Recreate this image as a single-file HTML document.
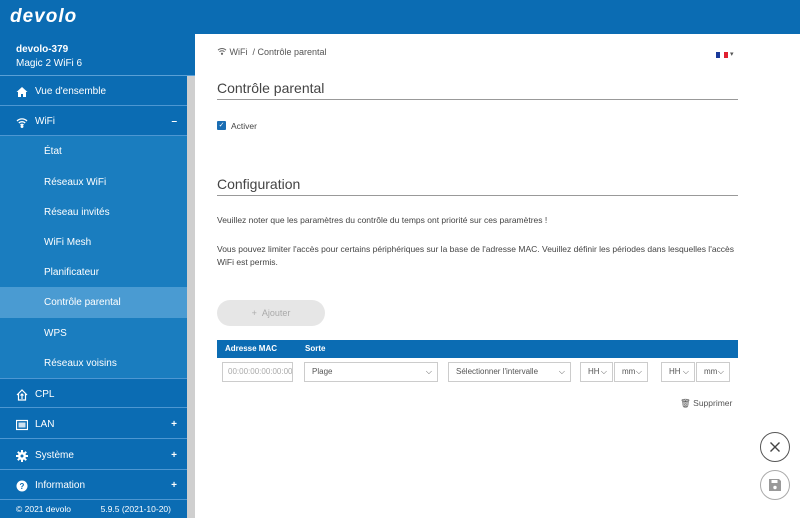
<!DOCTYPE html>
<html><head><meta charset="utf-8"><style>
*{box-sizing:border-box;margin:0;padding:0}
body{width:800px;height:518px;overflow:hidden;font-family:"Liberation Sans",sans-serif;background:#fff;position:relative;color:#333}
.top{position:absolute;left:0;top:0;width:800px;height:34px;background:#0b6cb3}
.logo{position:absolute;left:10px;top:6px;color:#fff;font-size:19px;font-style:italic;font-weight:bold;letter-spacing:1px}
.side{position:absolute;left:0;top:34px;width:195px;height:484px;background:#0b6cb3}
.scroll{position:absolute;left:187px;top:76px;width:8px;height:442px;background:#cfcfcf}
.dev{position:absolute;left:0;top:1px;width:195px;height:41px;color:#fff;padding:8px 16px;font-size:10px;line-height:14px;border-bottom:1px solid #5aa0d6}
.it{position:absolute;left:0;width:187px;height:30px;color:#fff;font-size:10px;line-height:30px;padding-top:1px;padding-left:35px;border-bottom:1px solid #4d97d2}
.it.sub{padding-left:44px;background:#1a7dbf;border-bottom:none}
.it.sel{background:#4a9bd2}
.it .pm{position:absolute;right:10px;top:1px;font-weight:bold}
.ic{position:absolute;left:16px;top:10px;width:12px;height:12px}
.foot{position:absolute;left:0;top:466px;width:187px;height:18px;color:#fff;font-size:8.5px;line-height:18px;padding:0 16px;display:flex;justify-content:space-between}
.crumb{position:absolute;left:217px;top:48px;font-size:9px;color:#555}
h2{position:absolute;left:217px;font-size:14px;font-weight:normal;color:#444;width:521px;border-bottom:1px solid #999;padding-bottom:3px}
.txt{position:absolute;left:217px;font-size:8.5px;color:#444;line-height:13px;width:525px}
.btn{position:absolute;left:217px;top:300px;width:108px;height:26px;border-radius:13px;background:#e6e6e6;color:#aaa;font-size:9px;line-height:26px;text-align:center}
.th{position:absolute;left:217px;top:340px;width:521px;height:18px;background:#0b6cb3;color:#fff;font-size:8px;font-weight:bold;line-height:18px}
.sel2{position:absolute;top:362px;height:20px;border:1px solid #ccc;font-size:8px;color:#555;line-height:18px;padding-left:7px}
.sel2 .v{position:absolute;right:5px;top:0;color:#555;font-size:8px}
.circ{position:absolute;left:760px;width:30px;height:30px;border-radius:50%;border:1.5px solid #555;text-align:center}
</style></head><body>
<div class="top"><div class="logo">devolo</div></div>
<div class="side">
<div class="dev"><b>devolo-379</b><br>Magic 2 WiFi 6</div>
</div>
<div class="scroll"></div>
<div class="it" style="top:76px"><svg class="ic" viewBox="0 0 12 12"><path d="M6 1L0.5 6H2v5h3V8h2v3h3V6h1.5z" fill="#fff"/></svg>Vue d'ensemble</div>
<div class="it" style="top:106px"><svg class="ic" viewBox="0 0 12 12" fill="none" stroke="#fff" stroke-width="1.3"><path d="M1 5a7 7 0 0 1 10 0M2.8 7a4.5 4.5 0 0 1 6.4 0M4.5 9a2 2 0 0 1 3 0"/><circle cx="6" cy="10.5" r=".8" fill="#fff"/></svg>WiFi<span class="pm">–</span></div>
<div class="it sub" style="top:136px;height:31px">État</div>
<div class="it sub" style="top:167px">Réseaux WiFi</div>
<div class="it sub" style="top:197px">Réseau invités</div>
<div class="it sub" style="top:227px">WiFi Mesh</div>
<div class="it sub" style="top:257px">Planificateur</div>
<div class="it sub sel" style="top:287px;height:31px">Contrôle parental</div>
<div class="it sub" style="top:318px">WPS</div>
<div class="it sub" style="top:348px">Réseaux voisins</div>
<div class="it" style="top:378px;border-top:1px solid #4d97d2"><svg class="ic" viewBox="0 0 12 12" fill="none" stroke="#fff" stroke-width="1.2"><path d="M1 6L6 1l5 5M2.5 5v6h7V5M6 10V5M4.5 6.5L6 5l1.5 1.5"/></svg>CPL</div>
<div class="it" style="top:409px"><svg class="ic" viewBox="0 0 12 12"><rect x=".5" y="1.5" width="11" height="9" fill="none" stroke="#fff" stroke-width="1.2"/><rect x="2.5" y="3.5" width="7" height="5" fill="#fff" opacity=".8"/></svg>LAN<span class="pm">+</span></div>
<div class="it" style="top:440px"><svg class="ic" viewBox="0 0 12 12"><circle cx="6" cy="6" r="4" fill="#fff"/><path d="M6 0v12M0 6h12M1.8 1.8l8.4 8.4M10.2 1.8l-8.4 8.4" stroke="#fff" stroke-width="2"/><circle cx="6" cy="6" r="1.5" fill="#0b6cb3"/></svg>Système<span class="pm">+</span></div>
<div class="it" style="top:470px"><svg class="ic" viewBox="0 0 12 12"><circle cx="6" cy="6" r="5.5" fill="#fff"/><text x="6" y="9" font-size="8" text-anchor="middle" fill="#0b6cb3" font-weight="bold" font-family="Liberation Sans">?</text></svg>Information<span class="pm">+</span></div>
<div class="foot" style="top:500px"><span>© 2021 devolo</span><span>5.9.5 (2021-10-20)</span></div>

<div class="crumb" style="top:47px"><svg width="10" height="8" viewBox="0 0 12 10" fill="none" stroke="#666" stroke-width="1.2"><path d="M1 4a7 7 0 0 1 10 0M2.8 6a4.5 4.5 0 0 1 6.4 0"/><circle cx="6" cy="8.5" r=".8" fill="#666"/></svg> WiFi &nbsp;/ Contrôle parental</div>
<div style="position:absolute;left:716px;top:52px;width:4px;height:6px;background:#1a3a9a"></div>
<div style="position:absolute;left:724px;top:52px;width:4px;height:6px;background:#e02030"></div>
<div style="position:absolute;left:730px;top:50px;font-size:7px;color:#555">▾</div>
<h2 style="top:80px">Contrôle parental</h2>
<div style="position:absolute;left:217px;top:121px;width:9px;height:9px;background:#1a6db3;border-radius:1px;color:#fff;font-size:7px;line-height:9px;text-align:center">✓</div>
<div class="txt" style="top:120px;left:231px">Activer</div>
<h2 style="top:176px">Configuration</h2>
<div class="txt" style="top:214px">Veuillez noter que les paramètres du contrôle du temps ont priorité sur ces paramètres !</div>
<div class="txt" style="top:243px;width:522px">Vous pouvez limiter l'accès pour certains périphériques sur la base de l'adresse MAC. Veuillez définir les périodes dans lesquelles l'accès<br>WiFi est permis.</div>
<div class="btn">+ &nbsp;Ajouter</div>
<div class="th"><span style="position:absolute;left:8px">Adresse MAC</span><span style="position:absolute;left:88px">Sorte</span></div>
<div class="sel2" style="left:222px;width:71px;color:#aaa;overflow:hidden;white-space:nowrap;padding-left:5px">00:00:00:00:00:00</div>
<div class="sel2" style="left:304px;width:134px">Plage<span class="v">⌵</span></div>
<div class="sel2" style="left:448px;width:123px">Sélectionner l'intervalle<span class="v">⌵</span></div>
<div class="sel2" style="left:580px;width:33px">HH<span class="v">⌵</span></div>
<div class="sel2" style="left:614px;width:34px">mm<span class="v">⌵</span></div>
<div class="sel2" style="left:661px;width:34px">HH<span class="v">⌵</span></div>
<div class="sel2" style="left:696px;width:34px">mm<span class="v">⌵</span></div>
<div class="txt" style="top:397px;left:680px;color:#555;width:60px">🗑 Supprimer</div>
<div class="circ" style="top:432px"><svg width="12" height="12" viewBox="0 0 12 12" style="margin-top:8px"><path d="M1.5 1.5l9 9M10.5 1.5l-9 9" stroke="#444" stroke-width="1.4"/></svg></div>
<div class="circ" style="top:470px;border-color:#aaa"><svg width="14" height="14" viewBox="0 0 14 14" style="margin-top:7px"><path d="M1 1h10l2 2v10H1z" fill="#999"/><rect x="3.5" y="2" width="6" height="3" fill="#fff"/><circle cx="7" cy="9.5" r="1.7" fill="#fff"/></svg></div>
</body></html>
